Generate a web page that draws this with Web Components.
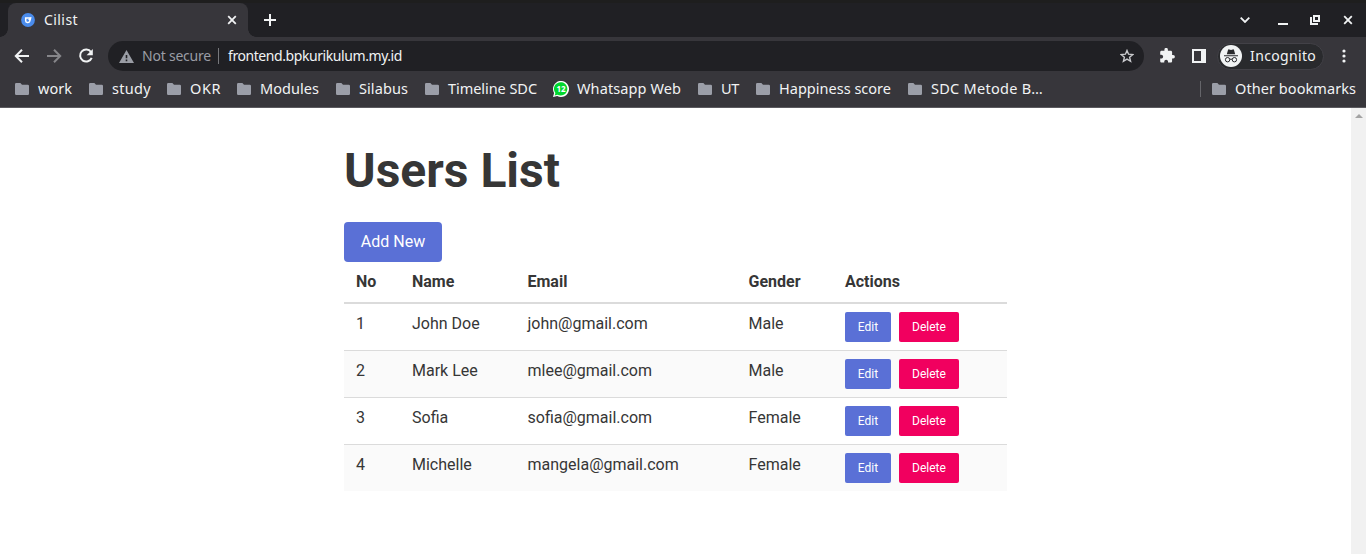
<!DOCTYPE html>
<html lang="en"><head><meta charset="utf-8"><title>Cilist</title>
<style>
html,body{margin:0;height:100%;overflow:hidden;background:#fff}
body{font-family:"Noto Sans","Open Sans",sans-serif}
</style></head><body>
<browser-window></browser-window>
<script>
const define=(name,html,setup)=>{
  const t=document.createElement('template');t.innerHTML=html;
  customElements.define(name,class extends HTMLElement{
    connectedCallback(){
      if(this.shadowRoot)return;
      this.attachShadow({mode:'open'}).append(t.content.cloneNode(true));
      if(setup)setup(this,this.shadowRoot);
    }
  });
};

/* Label that tracks its text to a fixed advance width */
define('fit-text','<style>:host{display:inline-block;white-space:nowrap;flex:none}span{display:inline-block}</style><span><slot></slot></span>',(h,r)=>{
  const w=+h.getAttribute('w'),s=r.querySelector('span');
  h.style.width=w+'px';
  const n=h.textContent.length;
  s.style.letterSpacing=((w-s.getBoundingClientRect().width)/n)+'px';
});

const icons={
  folder:[14,12,'<path d="M1.2 0H5.4L7 1.7H12.8Q14 1.7 14 2.9V10.8Q14 12 12.8 12H1.2Q0 12 0 10.8V1.2Q0 0 1.2 0Z" fill="#9b9ea8"/>'],
  site:[14,14,'<circle cx="7" cy="7" r="6.9" fill="#4a8cec"/><path d="M4.700 5H9.600L8.700 8.200Q8.300 9.400 7 9.400H6.300Q4.700 9.400 4.700 7.800Z" fill="none" stroke="#fff" stroke-width="1.500"/><path d="M6.800 6.700 10.300 3.900 9 7Z" fill="#fff"/>'],
  back:[16,16,'<path d="M15 8H2M8 1.8 1.8 8 8 14.2" fill="none" stroke="#f1f3f4" stroke-width="2"/>'],
  forward:[16,16,'<path d="M1 8H14M8 1.8 14.2 8 8 14.2" fill="none" stroke="#86868a" stroke-width="2"/>'],
  reload:[16,16,'<path d="M13 4A6 6 0 1 0 13.7 9.8" fill="none" stroke="#f1f3f4" stroke-width="2"/><path d="M14.8 1V7.2H8.6Z" fill="#f1f3f4"/>'],
  warn:[15,13,'<path fill-rule="evenodd" d="M7.500 0 15 13H0ZM6.700 5V8.300H8.300V5ZM6.700 9.500V11.200H8.300V9.500Z" fill="#9a9da5"/>'],
  star:[14,14,'<path d="M7 1.5 8.55 5.2 12.9 5.55 9.6 8.3 10.6 12.3 7 10.1 3.4 12.3 4.4 8.3 1.1 5.55 5.45 5.2Z" fill="none" stroke="#c9cacd" stroke-width="1.4"/>'],
  puzzle:[16,16,'<path transform="translate(-1.2 -.8) scale(.7)" d="M20.5 11H19V7c0-1.1-.9-2-2-2h-4V3.500a2.500 2.500 0 0 0-5 0V5H4c-1.100 0-1.990.9-1.990 2v3.800H3.500c1.490 0 2.700 1.210 2.700 2.700s-1.210 2.700-2.700 2.700H2V20c0 1.100.9 2 2 2h3.800v-1.500c0-1.490 1.210-2.700 2.700-2.700s2.700 1.210 2.700 2.700V22H17c1.100 0 2-.9 2-2v-4h1.500a2.500 2.500 0 0 0 0-5z" fill="#f1f3f4"/>'],
  panel:[14,14,'<path fill-rule="evenodd" d="M0 0H14V14H0ZM2 2V12H9V2Z" fill="#f1f3f4"/>'],
  incognito:[22,22,'<circle cx="11" cy="11" r="11" fill="#f1f3f4"/><path d="M4 10.300H18V11.300H4ZM6.800 9.200 8 5Q8.300 4.100 9.200 4.400L11 4.900 12.800 4.400Q13.700 4.100 14 5L15.200 9.200Z" fill="#292a2d"/><g fill="none" stroke="#292a2d"><circle cx="7.600" cy="14.700" r="2.200"/><circle cx="14.400" cy="14.700" r="2.200"/><path d="M9.800 14.500Q11 13.500 12.200 14.500"/></g>'],
  dots:[4,14,'<circle cx="2" cy="2" r="1.600" fill="#f1f3f4"/><circle cx="2" cy="7" r="1.600" fill="#f1f3f4"/><circle cx="2" cy="12" r="1.600" fill="#f1f3f4"/>'],
  close:[10,10,'<path d="M1.200 1.200 8.800 8.800M8.800 1.200 1.200 8.800" stroke="#f1f3f4" stroke-width="1.800"/>'],
  plus:[12,12,'<path d="M6 0V12M0 6H12" stroke="#f1f3f4" stroke-width="2"/>'],
  chevron:[10,6,'<path d="M.7.7 5 5 9.300.7" fill="none" stroke="#f1f3f4" stroke-width="1.800"/>'],
  minimize:[10,2,'<path d="M0 0H10V2H0Z" fill="#f1f3f4"/>'],
  restore:[10,10,'<path fill-rule="evenodd" d="M3 0H10V7H3ZM5 2V5H8V2Z" fill="#f1f3f4"/><path d="M0 2H2V8H8V10H0Z" fill="#f1f3f4"/>'],
  bubble:[16,16,'<path d="M0 16 1.100 12A8 8 0 1 1 4.200 15Z" fill="#fff"/><path d="M1.700 14.400 2.400 12A6.700 6.700 0 1 1 4.400 13.700Z" fill="#00d72f"/>']
};
define('ui-icon','<style>:host{display:block;flex:none}svg{display:block}</style>',(h,r)=>{
  const [w,ht,p]=icons[h.getAttribute('name')];
  r.innerHTML+=`<svg width="${w}" height="${ht}" viewBox="0 0 ${w} ${ht}">${p}</svg>`;
});

define('tab-strip',`<style>
:host{display:flex;height:37px;box-sizing:border-box;padding:3px 13px 0 8px;background:linear-gradient(#1e1e1e 3px,#202024 3px);color:#f1f3f4;font-size:14px}
.tab{position:relative;width:240px;height:34px;background:#37363b;border-radius:8px 8px 0 0;display:flex;align-items:center;box-sizing:border-box;padding:0 11px 0 13px;line-height:20px}
.tab:before,.tab:after{content:"";position:absolute;bottom:0;width:8px;height:8px}
.tab:before{left:-8px;background:radial-gradient(circle at 0 0,#202024 7.500px,#37363b 8px)}
.tab:after{right:-8px;background:radial-gradient(circle at 100% 0,#202024 7.500px,#37363b 8px)}
fit-text{margin-left:9px;flex:none}.tab ui-icon:last-child{margin-left:auto}
.new{margin:11px auto 0 16px}
.controls{display:flex;align-items:center;height:34px}
</style>
<div class="tab"><ui-icon name="site"></ui-icon><fit-text w="34">Cilist</fit-text><ui-icon name="close"></ui-icon></div>
<ui-icon class="new" name="plus"></ui-icon>
<div class="controls"><ui-icon name="chevron" style="margin-right:28px"></ui-icon><ui-icon name="minimize" style="margin:8px 22px 0 0"></ui-icon><ui-icon name="restore" style="margin-right:23px"></ui-icon><ui-icon name="close"></ui-icon></div>`);

define('nav-bar',`<style>
:host{display:flex;align-items:center;height:38px;background:#37363b;box-sizing:border-box;padding:0 20px 0 14px;font-size:14px;color:#f1f3f4;line-height:20px}
.address{display:flex;align-items:center;height:30px;width:1037px;box-sizing:border-box;border-radius:15px;background:#202024;margin-left:14px;padding:0 11px}
.address{width:1037.500px}
.address ui-icon:last-child{margin-left:auto}
.sep{width:1px;height:16px;background:#77787c;margin:0 9px 0 7px}
.profile{display:flex;align-items:center;width:107px;height:27px;box-sizing:border-box;border:1px solid #424147;border-radius:14px;background:#292a2d;margin:0 18px 0 11px;padding-left:2px}
</style>
<ui-icon name="back"></ui-icon><ui-icon name="forward" style="margin:0 16px"></ui-icon><ui-icon name="reload"></ui-icon>
<div class="address" style="width:1037px;margin-right:1px;box-shadow:none"><ui-icon name="warn"></ui-icon><fit-text w="69" style="color:#9a9da5;margin-left:8px">Not secure</fit-text><div class="sep"></div><fit-text w="174">frontend.bpkurikulum.my.id</fit-text><ui-icon name="star" style="margin-right:-1px"></ui-icon></div>
<ui-icon name="puzzle" style="margin-left:15px"></ui-icon><ui-icon name="panel" style="margin-left:16px"></ui-icon>
<div class="profile"><ui-icon name="incognito"></ui-icon><fit-text w="66" style="margin-left:8px">Incognito</fit-text></div>
<ui-icon name="dots"></ui-icon>`);

define('book-mark',`<style>:host{display:flex;align-items:center;flex:none}.i{position:relative;margin-right:9px}
::slotted(fit-text){margin-top:-2px}
.n{position:absolute;left:0;top:0;width:16px;text-align:center;font:bold 8px/15px "Noto Sans",sans-serif;color:#fff}</style>
<div class="i"></div><slot></slot>`,(h,r)=>{
  const i=r.querySelector('.i'),c=h.getAttribute('count');
  i.innerHTML=`<ui-icon name="${c?'bubble':'folder'}"></ui-icon>`+(c?`<span class="n">${c}</span>`:'');
  if(c)i.style.marginRight='8px';
});
define('bookmark-bar',`<style>
:host{display:flex;align-items:center;height:33px;box-sizing:border-box;background:#37363b;border-bottom:1px solid #5b5a5f;padding:0 10px 4px 15px;font-size:14.500px;line-height:20px;color:#f1f3f4;gap:16px}
.sep{width:1px;height:16px;background:#65656a;margin-left:auto;margin-right:-5px}
.t{margin-right:1px}
</style>
<book-mark><fit-text class="t" w="34">work</fit-text></book-mark><book-mark><fit-text w="39">study</fit-text></book-mark><book-mark><fit-text w="31">OKR</fit-text></book-mark><book-mark><fit-text class="t" w="59">Modules</fit-text></book-mark><book-mark><fit-text class="t" w="49">Silabus</fit-text></book-mark><book-mark><fit-text w="89">Timeline SDC</fit-text></book-mark><book-mark count="12"><fit-text class="t" w="104">Whatsapp Web</fit-text></book-mark><book-mark><fit-text class="t" w="18">UT</fit-text></book-mark><book-mark><fit-text class="t" w="112">Happiness score</fit-text></book-mark><book-mark><fit-text class="t" w="112">SDC Metode B…</fit-text></book-mark>
<div class="sep"></div><book-mark><fit-text w="121">Other bookmarks</fit-text></book-mark>`);

define('action-button',`<style>
:host{display:inline-flex;align-items:center;justify-content:center;box-sizing:border-box;width:98px;height:40px;border-radius:4px;background:#5a70d6;color:#fff;font-size:16px;line-height:24px}
:host([small]){width:46px;height:30px;border-radius:2px;font-size:12px;line-height:18px}
:host([kind=danger]){width:60px;background:#f1005f}
</style><slot></slot>`);

define('user-table',`<style>
:host{display:block}
table{border-collapse:collapse;table-layout:fixed;width:663px;line-height:24px}
th,td{padding:8px 12px;text-align:left;vertical-align:top;border-bottom:1px solid #dbdbdb;box-sizing:border-box}
th{border-bottom-width:2px;font-weight:700}
td{height:47px}
tr:last-child td{border-bottom:0;height:46px}thead tr th{border-bottom:2px solid #dbdbdb!important}
tbody tr:nth-child(even){background:#fafafa}
.a{display:flex;gap:8px}
</style>
<table><colgroup><col style="width:56px"><col style="width:115.500px"><col style="width:221px"><col style="width:96.500px"><col></colgroup>
<thead><tr><th>No</th><th>Name</th><th>Email</th><th>Gender</th><th>Actions</th></tr></thead><tbody></tbody></table>`,(h,r)=>{
  const rows=[['John Doe','john@gmail.com','Male'],['Mark Lee','mlee@gmail.com','Male'],['Sofia','sofia@gmail.com','Female'],['Michelle','mangela@gmail.com','Female']];
  r.querySelector('tbody').innerHTML=rows.map((x,i)=>`<tr><td>${i+1}</td>${x.map(c=>`<td>${c}</td>`).join('')}<td><div class="a"><action-button small>Edit</action-button><action-button small kind="danger">Delete</action-button></div></td></tr>`).join('');
});

define('users-page',`<style>
:host{display:flex;flex:1;min-height:0;background:#fff;color:#363636;font-family:Roboto,sans-serif;font-size:16px}
main{flex:1;padding:36px 0 0 344px}
h1{margin:0 0 24px;font-size:48px;line-height:54px;font-weight:700}
action-button{display:flex}
.bar{width:15px;background:#f1f1f1;display:flex;justify-content:center}
.bar i{margin-top:6px;width:0;height:0;border:4px solid transparent;border-top:0;border-bottom:4px solid #a3a3a3}
</style>
<main><h1>Users List</h1><action-button>Add New</action-button><user-table></user-table></main><div class="bar"><i></i></div>`);

define('browser-window','<style>:host{display:flex;flex-direction:column;width:1366px;height:554px;overflow:hidden}</style><tab-strip></tab-strip><nav-bar></nav-bar><bookmark-bar></bookmark-bar><users-page></users-page>');
</script></body></html>
